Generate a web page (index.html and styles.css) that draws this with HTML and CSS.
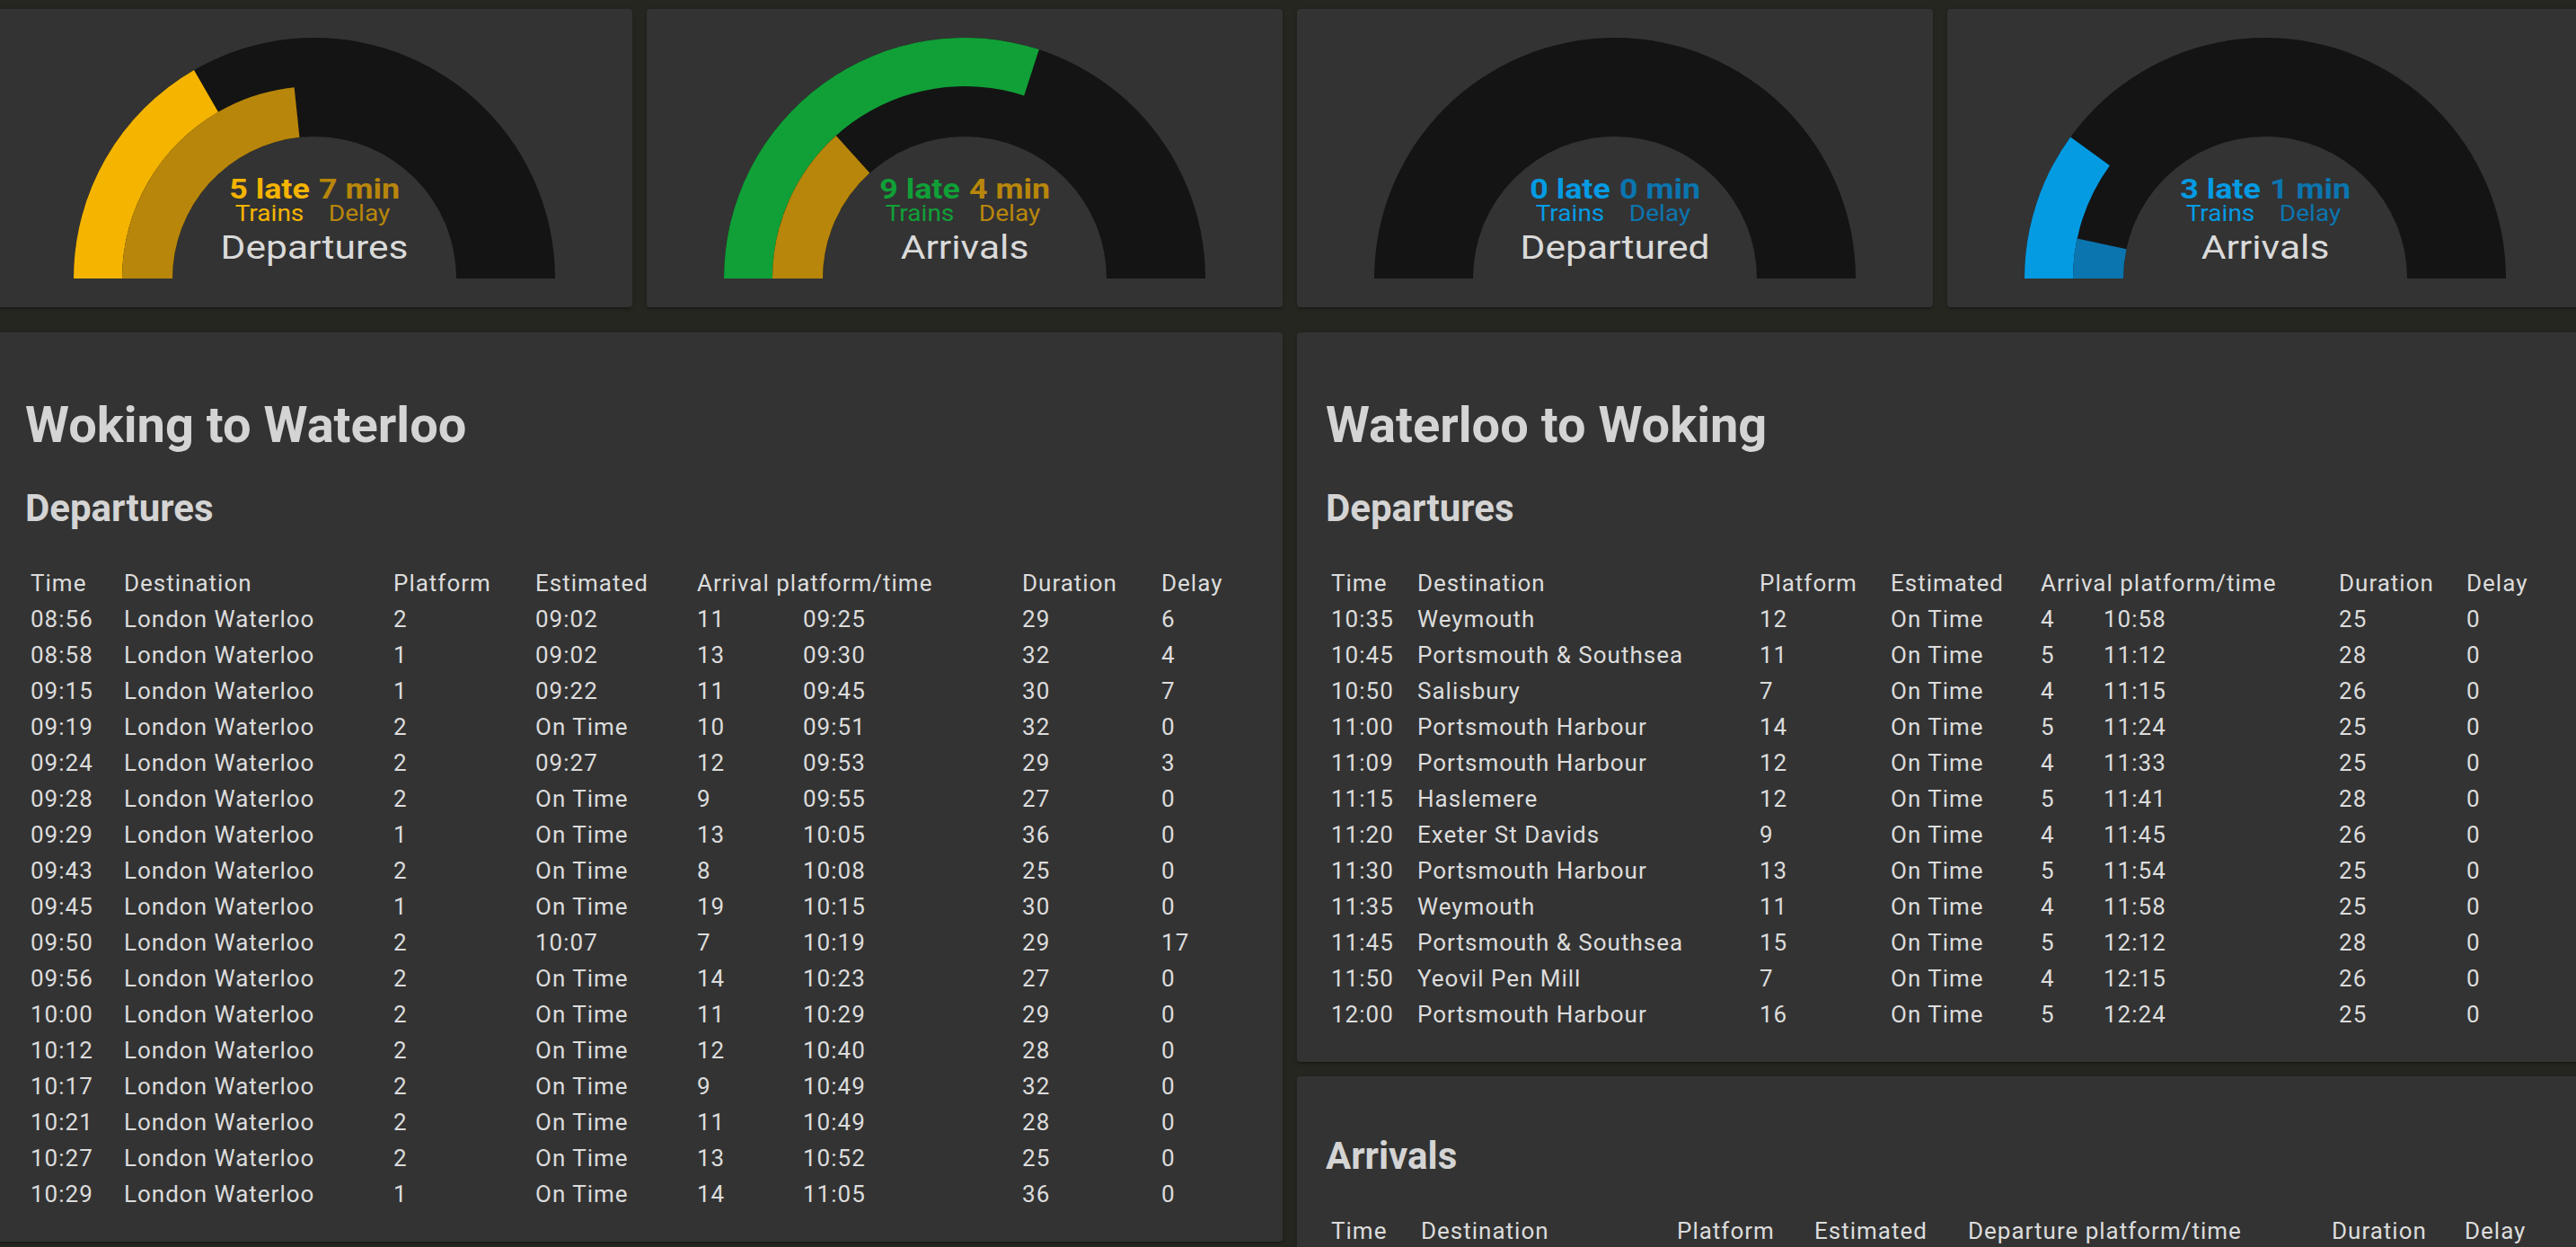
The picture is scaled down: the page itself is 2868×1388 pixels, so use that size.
FILE: index.html
```html
<!DOCTYPE html>
<html lang="en">
<head>
<meta charset="utf-8">
<title>Train dashboard</title>
<link rel="stylesheet" href="styles.css">
</head>
<body>
<div class="page">
  <div class="gauges">
    <div class="card gauge-card">
      <svg class="gauge" width="536" height="268" viewBox="0 0 536 268">
        <path class="track" d="M0 268 A268 268 0 0 1 536 268 L426 268 A158 158 0 0 0 110 268 Z"/>
        <path class="f-yellow" d="M0 268 A268 268 0 0 1 134 35.91 L161 82.67 A214 214 0 0 0 54 268 Z"/>
        <path class="f-gold" d="M54 268 A214 214 0 0 1 245.63 55.17 L251.48 110.87 A158 158 0 0 0 110 268 Z"/>
        <text class="g-big c-yellow" transform="translate(218 179) scale(1.12 1)">5 late</text>
        <text class="g-big c-gold" transform="translate(318 179) scale(1.12 1)">7 min</text>
        <text class="g-small c-yellow" transform="translate(218 204) scale(1.1 1)">Trains</text>
        <text class="g-small c-gold" transform="translate(318 204) scale(1.1 1)">Delay</text>
        <text class="g-label" transform="translate(268 246) scale(1.15 1)">Departures</text>
      </svg>
    </div>
    <div class="card gauge-card">
      <svg class="gauge" width="536" height="268" viewBox="0 0 536 268">
        <path class="track" d="M0 268 A268 268 0 0 1 536 268 L426 268 A158 158 0 0 0 110 268 Z"/>
        <path class="f-green" d="M0 268 A268 268 0 0 1 350.82 13.12 L334.13 64.47 A214 214 0 0 0 54 268 Z"/>
        <path class="f-gold" d="M54 268 A214 214 0 0 1 124.81 108.97 L162.28 150.58 A158 158 0 0 0 110 268 Z"/>
        <text class="g-big c-green" transform="translate(218 179) scale(1.12 1)">9 late</text>
        <text class="g-big c-gold" transform="translate(318 179) scale(1.12 1)">4 min</text>
        <text class="g-small c-green" transform="translate(218 204) scale(1.1 1)">Trains</text>
        <text class="g-small c-gold" transform="translate(318 204) scale(1.1 1)">Delay</text>
        <text class="g-label" transform="translate(268 246) scale(1.15 1)">Arrivals</text>
      </svg>
    </div>
    <div class="card gauge-card">
      <svg class="gauge" width="536" height="268" viewBox="0 0 536 268">
        <path class="track" d="M0 268 A268 268 0 0 1 536 268 L426 268 A158 158 0 0 0 110 268 Z"/>
        <text class="g-big c-blue" transform="translate(218 179) scale(1.12 1)">0 late</text>
        <text class="g-big c-dblue" transform="translate(318 179) scale(1.12 1)">0 min</text>
        <text class="g-small c-blue" transform="translate(218 204) scale(1.1 1)">Trains</text>
        <text class="g-small c-dblue" transform="translate(318 204) scale(1.1 1)">Delay</text>
        <text class="g-label" transform="translate(268 246) scale(1.15 1)">Departured</text>
      </svg>
    </div>
    <div class="card gauge-card">
      <svg class="gauge" width="536" height="268" viewBox="0 0 536 268">
        <path class="track" d="M0 268 A268 268 0 0 1 536 268 L426 268 A158 158 0 0 0 110 268 Z"/>
        <path class="f-blue" d="M0 268 A268 268 0 0 1 51.18 110.47 L94.87 142.21 A214 214 0 0 0 54 268 Z"/>
        <path class="f-dblue" d="M54 268 A214 214 0 0 1 58.68 223.51 L113.45 235.15 A158 158 0 0 0 110 268 Z"/>
        <text class="g-big c-blue" transform="translate(218 179) scale(1.12 1)">3 late</text>
        <text class="g-big c-dblue" transform="translate(318 179) scale(1.12 1)">1 min</text>
        <text class="g-small c-blue" transform="translate(218 204) scale(1.1 1)">Trains</text>
        <text class="g-small c-dblue" transform="translate(318 204) scale(1.1 1)">Delay</text>
        <text class="g-label" transform="translate(268 246) scale(1.15 1)">Arrivals</text>
      </svg>
    </div>
  </div>

  <div class="panels">
    <div class="col">
      <div class="card panel">
        <h1 class="title">Woking to Waterloo</h1>
        <h2 class="sub">Departures</h2>
        <table class="trains t-left">
          <colgroup>
            <col class="w104"><col class="w300"><col class="w158"><col class="w180"><col class="w118"><col class="w244"><col class="w155"><col>
          </colgroup>
          <thead>
            <tr><th>Time</th><th>Destination</th><th>Platform</th><th>Estimated</th><th colspan="2">Arrival platform/time</th><th>Duration</th><th>Delay</th></tr>
          </thead>
          <tbody>
            <tr><td>08:56</td><td>London Waterloo</td><td>2</td><td>09:02</td><td>11</td><td>09:25</td><td>29</td><td>6</td></tr>
            <tr><td>08:58</td><td>London Waterloo</td><td>1</td><td>09:02</td><td>13</td><td>09:30</td><td>32</td><td>4</td></tr>
            <tr><td>09:15</td><td>London Waterloo</td><td>1</td><td>09:22</td><td>11</td><td>09:45</td><td>30</td><td>7</td></tr>
            <tr><td>09:19</td><td>London Waterloo</td><td>2</td><td>On Time</td><td>10</td><td>09:51</td><td>32</td><td>0</td></tr>
            <tr><td>09:24</td><td>London Waterloo</td><td>2</td><td>09:27</td><td>12</td><td>09:53</td><td>29</td><td>3</td></tr>
            <tr><td>09:28</td><td>London Waterloo</td><td>2</td><td>On Time</td><td>9</td><td>09:55</td><td>27</td><td>0</td></tr>
            <tr><td>09:29</td><td>London Waterloo</td><td>1</td><td>On Time</td><td>13</td><td>10:05</td><td>36</td><td>0</td></tr>
            <tr><td>09:43</td><td>London Waterloo</td><td>2</td><td>On Time</td><td>8</td><td>10:08</td><td>25</td><td>0</td></tr>
            <tr><td>09:45</td><td>London Waterloo</td><td>1</td><td>On Time</td><td>19</td><td>10:15</td><td>30</td><td>0</td></tr>
            <tr><td>09:50</td><td>London Waterloo</td><td>2</td><td>10:07</td><td>7</td><td>10:19</td><td>29</td><td>17</td></tr>
            <tr><td>09:56</td><td>London Waterloo</td><td>2</td><td>On Time</td><td>14</td><td>10:23</td><td>27</td><td>0</td></tr>
            <tr><td>10:00</td><td>London Waterloo</td><td>2</td><td>On Time</td><td>11</td><td>10:29</td><td>29</td><td>0</td></tr>
            <tr><td>10:12</td><td>London Waterloo</td><td>2</td><td>On Time</td><td>12</td><td>10:40</td><td>28</td><td>0</td></tr>
            <tr><td>10:17</td><td>London Waterloo</td><td>2</td><td>On Time</td><td>9</td><td>10:49</td><td>32</td><td>0</td></tr>
            <tr><td>10:21</td><td>London Waterloo</td><td>2</td><td>On Time</td><td>11</td><td>10:49</td><td>28</td><td>0</td></tr>
            <tr><td>10:27</td><td>London Waterloo</td><td>2</td><td>On Time</td><td>13</td><td>10:52</td><td>25</td><td>0</td></tr>
            <tr><td>10:29</td><td>London Waterloo</td><td>1</td><td>On Time</td><td>14</td><td>11:05</td><td>36</td><td>0</td></tr>
          </tbody>
        </table>
      </div>
    </div>

    <div class="col">
      <div class="card panel">
        <h1 class="title">Waterloo to Woking</h1>
        <h2 class="sub">Departures</h2>
        <table class="trains t-right">
          <colgroup>
            <col class="w96"><col class="w381"><col class="w146"><col class="w167"><col class="w70"><col class="w262"><col class="w142"><col>
          </colgroup>
          <thead>
            <tr><th>Time</th><th>Destination</th><th>Platform</th><th>Estimated</th><th colspan="2">Arrival platform/time</th><th>Duration</th><th>Delay</th></tr>
          </thead>
          <tbody>
            <tr><td>10:35</td><td>Weymouth</td><td>12</td><td>On Time</td><td>4</td><td>10:58</td><td>25</td><td>0</td></tr>
            <tr><td>10:45</td><td>Portsmouth &amp; Southsea</td><td>11</td><td>On Time</td><td>5</td><td>11:12</td><td>28</td><td>0</td></tr>
            <tr><td>10:50</td><td>Salisbury</td><td>7</td><td>On Time</td><td>4</td><td>11:15</td><td>26</td><td>0</td></tr>
            <tr><td>11:00</td><td>Portsmouth Harbour</td><td>14</td><td>On Time</td><td>5</td><td>11:24</td><td>25</td><td>0</td></tr>
            <tr><td>11:09</td><td>Portsmouth Harbour</td><td>12</td><td>On Time</td><td>4</td><td>11:33</td><td>25</td><td>0</td></tr>
            <tr><td>11:15</td><td>Haslemere</td><td>12</td><td>On Time</td><td>5</td><td>11:41</td><td>28</td><td>0</td></tr>
            <tr><td>11:20</td><td>Exeter St Davids</td><td>9</td><td>On Time</td><td>4</td><td>11:45</td><td>26</td><td>0</td></tr>
            <tr><td>11:30</td><td>Portsmouth Harbour</td><td>13</td><td>On Time</td><td>5</td><td>11:54</td><td>25</td><td>0</td></tr>
            <tr><td>11:35</td><td>Weymouth</td><td>11</td><td>On Time</td><td>4</td><td>11:58</td><td>25</td><td>0</td></tr>
            <tr><td>11:45</td><td>Portsmouth &amp; Southsea</td><td>15</td><td>On Time</td><td>5</td><td>12:12</td><td>28</td><td>0</td></tr>
            <tr><td>11:50</td><td>Yeovil Pen Mill</td><td>7</td><td>On Time</td><td>4</td><td>12:15</td><td>26</td><td>0</td></tr>
            <tr><td>12:00</td><td>Portsmouth Harbour</td><td>16</td><td>On Time</td><td>5</td><td>12:24</td><td>25</td><td>0</td></tr>
          </tbody>
        </table>
      </div>

      <div class="card panel">
        <h2 class="sub sub-first">Arrivals</h2>
        <table class="trains t-arr">
          <colgroup>
            <col class="w100"><col class="w285"><col class="w153"><col class="w171"><col class="w70"><col class="w335"><col class="w148"><col>
          </colgroup>
          <thead>
            <tr><th>Time</th><th>Destination</th><th>Platform</th><th>Estimated</th><th colspan="2">Departure platform/time</th><th>Duration</th><th>Delay</th></tr>
          </thead>
        </table>
      </div>
    </div>
  </div>
</div>
</body>
</html>
```

FILE: styles.css
```css
html, body {
  margin: 0;
  padding: 0;
}

body {
  background: #262621;
  overflow: hidden;
  font-family: Roboto, "Liberation Sans", sans-serif;
  color: #d8d8d8;
}

.page {
  width: 2880px;
  margin-left: -4px;
  padding-top: 10px;
}

.card {
  background: #333333;
  border-radius: 4px;
  box-shadow: 0 2px 2px rgba(0, 0, 0, 0.14), 0 1px 5px rgba(0, 0, 0, 0.12), 0 3px 1px -2px rgba(0, 0, 0, 0.2);
}

/* ---------- gauges ---------- */
.gauges {
  display: grid;
  grid-template-columns: repeat(4, 708px);
  column-gap: 16px;
}

.gauge-card {
  height: 332px;
  display: flex;
  align-items: center;
  justify-content: center;
}

.gauge {
  display: block;
  overflow: visible;
}

.track { fill: #141414; }
.f-yellow { fill: #f4b400; }
.f-gold { fill: #b8860b; }
.f-green { fill: #10a037; }
.f-blue { fill: #059be3; }
.f-dblue { fill: #0b75af; }

.gauge text {
  font-family: Roboto, "Liberation Sans", sans-serif;
  text-anchor: middle;
}

.g-big {
  font-size: 32px;
  font-weight: 700;
}

.g-small {
  font-size: 25.5px;
  font-weight: 400;
}

.g-label {
  font-size: 37px;
  font-weight: 400;
  fill: #dadada;
}

.c-yellow { fill: #f4b400; }
.c-gold { fill: #b8860b; }
.c-green { fill: #10a037; }
.c-blue { fill: #059be3; }
.c-dblue { fill: #0b75af; }

/* ---------- panels ---------- */
.panels {
  display: grid;
  grid-template-columns: 1432px 1432px;
  column-gap: 16px;
  align-items: start;
  margin-top: 28px;
}

.col {
  display: flex;
  flex-direction: column;
  gap: 16px;
}

.panel {
  padding: 32px 32px 33px;
}

.title {
  margin: 37px 0 0;
  font-size: 56px;
  line-height: 68px;
  font-weight: 700;
  color: #d4d4d4;
}

.sub {
  margin: 35px 0 39px;
  font-size: 42px;
  line-height: 48px;
  font-weight: 700;
  color: #d4d4d4;
}

.sub-first {
  margin-top: 33px;
}

.trains {
  width: 100%;
  table-layout: fixed;
  border-collapse: collapse;
  font-size: 26px;
  letter-spacing: 1px;
  color: #dcdcdc;
}

.trains th,
.trains td {
  padding: 0 0 0 6px;
  height: 40px;
  line-height: 40px;
  text-align: left;
  font-weight: 400;
  white-space: nowrap;
}

.w70 { width: 70px; }
.w96 { width: 96px; }
.w100 { width: 100px; }
.w104 { width: 104px; }
.w118 { width: 118px; }
.w142 { width: 142px; }
.w146 { width: 146px; }
.w148 { width: 148px; }
.w153 { width: 153px; }
.w155 { width: 155px; }
.w158 { width: 158px; }
.w167 { width: 167px; }
.w171 { width: 171px; }
.w180 { width: 180px; }
.w244 { width: 244px; }
.w262 { width: 262px; }
.w285 { width: 285px; }
.w300 { width: 300px; }
.w335 { width: 335px; }
.w381 { width: 381px; }
```
